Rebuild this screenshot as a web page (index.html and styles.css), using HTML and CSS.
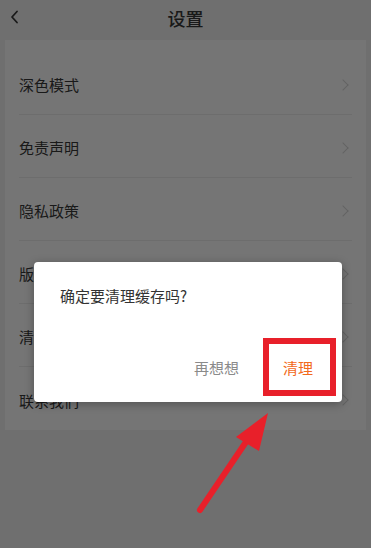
FILE: index.html
```html
<!DOCTYPE html>
<html lang="zh-CN">
<head>
    <meta charset="UTF-8">
    <meta name="viewport" content="width=device-width, initial-scale=1.0">
    <title>设置</title>
    <link rel="stylesheet" href="styles.css">
</head>
<body>

    <div class="page">
        <div class="header">
            <svg class="back" width="10" height="14" viewBox="0 0 10 14">
                <path d="M7 1.5 L2 7 L7 12.5" fill="none" stroke="#333" stroke-width="1.8" stroke-linecap="round" stroke-linejoin="round"/>
            </svg>
            <h2 class="title">设置</h2>
        </div>

        <div class="card">
            <div class="row"><span>深色模式</span><i class="arrow-right"></i></div>
            <div class="row"><span>免责声明</span><i class="arrow-right"></i></div>
            <div class="row"><span>隐私政策</span><i class="arrow-right"></i></div>
            <div class="row"><span>版本信息</span><i class="arrow-right"></i></div>
            <div class="row"><span>清理缓存</span><i class="arrow-right"></i></div>
            <div class="row last"><span>联系我们</span><i class="arrow-right"></i></div>
        </div>
    </div>

    <!-- Confirm Dialog -->
    <div class="mask"></div>
    <div class="dialog">
        <div class="dialog-text">确定要清理缓存吗?</div>
        <div class="dialog-actions">
            <button class="btn-cancel">再想想</button>
            <button class="btn-ok">清理</button>
        </div>
    </div>

    <!-- annotation -->
    <div class="mark-box"></div>
    <svg class="mark-arrow" width="371" height="548" viewBox="0 0 371 548">
        <line x1="200" y1="510" x2="250" y2="436" stroke="#e8202a" stroke-width="6" stroke-linecap="round"/>
        <polygon points="268,413 236,437 259,451" fill="#e8202a"/>
    </svg>

</body>
</html>
```

FILE: styles.css
```css
* {
    box-sizing: border-box;
}

body {
    margin: 0;
    font-family: "Noto Sans CJK SC", "Noto Sans", sans-serif;
    background-color: #dfdfdf;
    width: 371px;
    height: 548px;
    overflow: hidden;
    position: relative;
}

.header {
    height: 36px;
    margin-bottom: 4px;
    display: flex;
    align-items: center;
    justify-content: center;
    position: relative;
}

.header .back {
    position: absolute;
    left: 10px;
    top: 10px;
}

.title {
    margin: 0;
    font-size: 18px;
    font-weight: 500;
    color: #333;
    line-height: 1;
}

.card {
    margin: 0 5px;
    padding: 12px 14px 0;
    background-color: #ebebeb;
    height: 390px;
}

.row {
    height: 63px;
    display: flex;
    align-items: center;
    justify-content: space-between;
    border-bottom: 1px solid #dadada;
    padding-top: 3px;
    font-size: 15px;
    color: #333;
}

.row.last {
    border-bottom: none;
}

.arrow-right {
    width: 8px;
    height: 8px;
    border-top: 1px solid #c6c6c6;
    border-right: 1px solid #c6c6c6;
    transform: rotate(45deg);
    margin-right: 5px;
}

.mask {
    position: absolute;
    left: 0;
    top: 0;
    width: 100%;
    height: 100%;
    background-color: rgba(0, 0, 0, 0.5);
}

.dialog {
    position: absolute;
    left: 34px;
    top: 262px;
    width: 308px;
    height: 140px;
    background-color: white;
    border-radius: 4px;
    box-shadow: 0 2px 10px rgba(0, 0, 0, 0.3);
    padding: 24px 29px 0 26px;
}

.dialog-text {
    font-size: 15px;
    color: #333;
    line-height: 20px;
}

.dialog-actions {
    display: flex;
    justify-content: flex-end;
    gap: 44px;
    margin-top: 52px;
}

.dialog-actions button {
    border: none;
    background: none;
    padding: 0;
    font-family: inherit;
    font-size: 15px;
    line-height: 20px;
}

.btn-cancel {
    color: #8a8a8a;
}

.btn-ok {
    color: #f26a1b;
}

.mark-box {
    position: absolute;
    left: 263px;
    top: 338px;
    width: 73px;
    height: 58px;
    border: 6px solid #e8202a;
}

.mark-arrow {
    position: absolute;
    left: 0;
    top: 0;
}
```
